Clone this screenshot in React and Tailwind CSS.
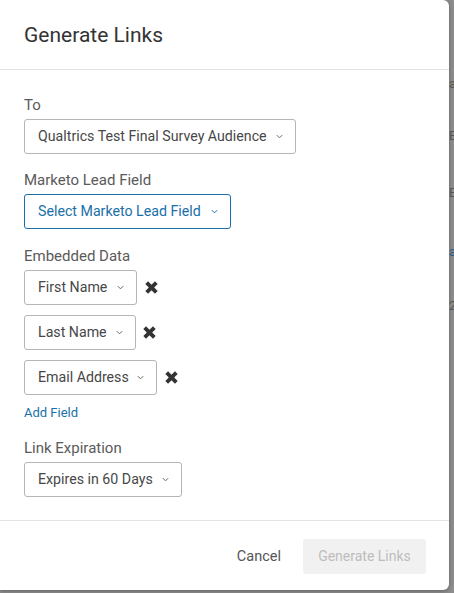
import React from 'react';

const Chevron = ({ className = '' }) => (
  <svg className={className} width="9" height="9" viewBox="0 0 10 10" fill="none" stroke="currentColor" strokeWidth="1.1">
    <path d="M2 3.5l3 3 3-3" />
  </svg>
);

const Cross = () => (
  <svg width="15" height="15" viewBox="0 0 14 14" className="text-[#333]">
    <path d="M2.5 2.5l9 9M11.5 2.5l-9 9" stroke="currentColor" strokeWidth="3.6" />
  </svg>
);

function Select({ label, blue = false, width }) {
  return (
    <button
      className={`flex items-center h-[35px] rounded-[3px] border pl-[13px] pr-[11px] text-[14.2px] bg-white ${
        blue ? 'border-[#1a6fa8] text-[#1a6fa8]' : 'border-[#b5b5b5] text-[#474747]'
      } ${width}`}
    >
      <span className="whitespace-nowrap">{label}</span>
      <Chevron className={`ml-auto shrink-0 ${blue ? 'text-[#1a6fa8]' : 'text-[#666]'}`} />
    </button>
  );
}

function Label({ children }) {
  return <p className="text-[15px] text-[#5a5a5a] leading-[20px] mb-[4px]">{children}</p>;
}

export default function App() {
  return (
    <div className="w-[454px] h-[593px] bg-[#8d8d8d] relative overflow-hidden" style={{ fontFamily: 'Roboto, "Liberation Sans", sans-serif' }}>
      <div className="absolute right-0 top-0 w-[5px] h-full text-[#555] text-[13px]">
        <span className="absolute top-[74px] left-0">a</span>
        <span className="absolute top-[126px] left-0">B</span>
        <span className="absolute top-[183px] left-0">E</span>
        <span className="absolute top-[242px] left-0 text-[#2a5c85]">a</span>
        <span className="absolute top-[296px] left-0">2</span>
      </div>
      <div className="w-[449px] h-[590px] bg-white rounded-r-[6px] flex flex-col shadow-[0_1px_4px_rgba(0,0,0,0.3)]">
        <div className="h-[70px] shrink-0 flex items-center px-[24px] border-b border-[#e3e3e3]">
          <h1 className="text-[21px] text-[#333] pt-[3px]">Generate Links</h1>
        </div>
        <div className="flex-1 px-[24px] pt-[25px] border-b border-[#e3e3e3]">
          <Label>To</Label>
          <Select label="Qualtrics Test Final Survey Audience" width="w-[272px]" />
          <div className="mt-[16px]">
            <Label>Marketo Lead Field</Label>
            <Select label="Select Marketo Lead Field" blue width="w-[207px]" />
          </div>
          <div className="mt-[17px]">
            <Label>Embedded Data</Label>
            <div className="flex flex-col gap-[10px]">
              <div className="flex items-center gap-[7px]">
                <Select label="First Name" width="w-[113px]" />
                <Cross />
              </div>
              <div className="flex items-center gap-[6px]">
                <Select label="Last Name" width="w-[112px]" />
                <Cross />
              </div>
              <div className="flex items-center gap-[7px]">
                <Select label="Email Address" width="w-[133px]" />
                <Cross />
              </div>
            </div>
            <a className="block text-[13px] text-[#1a6fa8] mt-[9px] leading-[18px]">Add Field</a>
          </div>
          <div className="mt-[16px]">
            <Label>Link Expiration</Label>
            <Select label="Expires in 60 Days" width="w-[158px]" />
          </div>
        </div>
        <div className="h-[69px] shrink-0 flex items-center justify-end pl-[23px] pr-[23px] gap-[22px] pt-[2px]">
          <button className="text-[14.5px] text-[#555] whitespace-nowrap">Cancel</button>
          <button className="h-[35px] w-[123px] rounded-[3px] bg-[#f1f1f1] text-[14px] text-[#bdbdbd] whitespace-nowrap">Generate Links</button>
        </div>
      </div>
    </div>
  );
}
